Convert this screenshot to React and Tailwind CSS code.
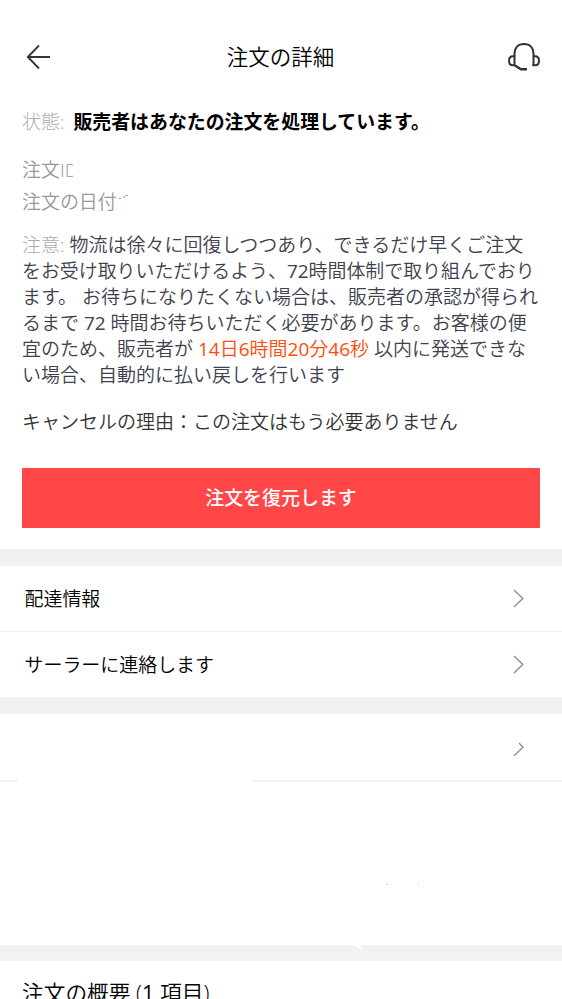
import React from 'react';

function BackIcon() {
  return (
    <svg width="26" height="26" viewBox="0 0 26 26" fill="none" stroke="#333333" strokeWidth="1.8">
      <path d="M13 1.5 L1.8 13 L13 24.5 M1.8 13 H24" />
    </svg>
  );
}

function HeadsetIcon() {
  return (
    <svg width="34" height="30" viewBox="0 0 34 30" fill="none" stroke="#333333" strokeWidth="2">
      <path d="M7.5 24 V12 C7.5 5.5 11.5 2 17 2 C22.5 2 26.5 5.5 26.5 12 V24" />
      <path d="M7.5 14.3 H6 C3 14.3 2 16 2 18.8 C2 21.5 3 23.3 6 23.3 H8" />
      <path d="M26.5 14.3 H28 C31 14.3 32 16 32 18.8 C32 21.5 31 23.3 28 23.3 H25.5" />
      <path d="M8 23.5 L14 27.3 H20" strokeWidth="2.4" />
    </svg>
  );
}

function Chevron({ faded }) {
  return (
    <svg width="12" height="20" viewBox="0 0 12 20" fill="none" stroke="#8a8b90" strokeWidth="1.3">
      <path d={faded ? 'M6 6 L10 10.3 L1 18.8' : 'M1 1 L9.8 9.5 L1 18'} />
    </svg>
  );
}

function LinkRow({ label }) {
  return (
    <div className="flex h-[65px] items-center justify-between pl-[24.5px] pr-[37px] text-black">
      <span className="text-[18.95px] leading-[26px]">{label}</span>
      <Chevron />
    </div>
  );
}

// Latin digits have no demi-light cut, so they use the regular weight
function WithDigits({ text }) {
  return text.split(/(\d+)/).map((part, i) => (
    i % 2 === 1 ? <span key={i} className="font-normal">{part}</span> : part
  ));
}

export default function App() {
  return (
    <div className="flex h-[999px] w-[562px] flex-col overflow-hidden whitespace-nowrap bg-white font-['Open_Sans','Noto_Sans_CJK_JP',sans-serif] text-[18.97px] font-[350] leading-[26px]">
      {/* Header */}
      <header className="mt-8 flex h-[50px] shrink-0 items-center justify-between pl-[26px] pr-[21px]">
        <BackIcon />
        <h1 className="pl-[2px] text-[21.5px] font-[350] text-black">注文の詳細</h1>
        <HeadsetIcon />
      </header>

      {/* Order status */}
      <section className="flex shrink-0 flex-col px-[22px] pt-[27px]">
        <div className="flex gap-[9px]">
          <span className="font-light text-[#aaaaaa]">状態:</span>
          <span className="text-[18.9px] font-bold text-black">販売者はあなたの注文を処理しています。</span>
        </div>

        <div className="mt-[22px] flex text-[#999999]">
          <span>注文I</span>
          <span className="w-[8px] overflow-hidden">D</span>
        </div>
        <div className="mt-[6px] flex text-[#999999]">
          <span>注文の日付</span>
          <svg className="mt-[5px]" width="14" height="14" viewBox="0 0 14 14" fill="none" stroke="#a0a0a0">
            <path d="M2 4.5 H4 M6 4 L9 1.5 H11" />
          </svg>
        </div>

        <div className="mt-[17px] text-[19px] text-[#3d404d]">
          <p><span className="font-light text-[#aaaaaa]">注意:</span> 物流は徐々に回復しつつあり、できるだけ早くご注文</p>
          <p className="text-[18.93px]"><WithDigits text="をお受け取りいただけるよう、72時間体制で取り組んでおり" /></p>
          <p>ます。 お待ちになりたくない場合は、販売者の承認が得られ</p>
          <p><WithDigits text="るまで 72 時間お待ちいただく必要があります。お客様の便" /></p>
          <p>
            宜のため、販売者が <span className="text-[#ff4b0a]"><WithDigits text="14日6時間20分46秒" /></span> 以内に発送できな
          </p>
          <p>い場合、自動的に払い戻しを行います</p>
        </div>

        <p className="mt-[21px] text-[19px] text-[#333333]">キャンセルの理由：この注文はもう必要ありません</p>

        <button className="mt-[33px] h-[60px] rounded-[1px] bg-[#ff4747] font-medium text-white">
          注文を復元します
        </button>
      </section>

      <div className="mt-[21px] h-[17px] shrink-0 bg-[#f1f1f1]" />

      {/* Links */}
      <nav className="shrink-0">
        <LinkRow label="配達情報" />
        <div className="h-px bg-[#f1f1f1]" />
        <LinkRow label="サーラーに連絡します" />
      </nav>

      <div className="h-[17px] shrink-0 bg-[#f1f1f1]" />

      {/* Store and item */}
      <section className="flex h-[231px] shrink-0 flex-col">
        <div className="flex h-[66px] items-center justify-end pr-[37px]">
          <Chevron faded />
        </div>
        <div className="flex h-[2px] justify-between">
          <div className="w-[18px] bg-[#f3f3f3]" />
          <div className="w-[311px] rounded-tl-full bg-[#f3f3f3]" />
        </div>
        <div className="mt-[102px] flex gap-[30px] pl-[386px]">
          <div className="h-px w-[2px] bg-[#d4d4d4]" />
          <div className="h-px w-px bg-[#cccccc]" />
        </div>
      </section>

      <div className="h-4 shrink-0 bg-[#f2f2f2]">
        <svg className="ml-[353px]" width="10" height="5" viewBox="0 0 10 5">
          <path d="M0 0 H6 L9 3 L7 4.5 L4 2.5 Z" fill="#ffffff" />
        </svg>
      </div>

      {/* Summary */}
      <h2 className="mt-[19px] pl-[22px] text-[21.7px] font-[350] text-black">
        <WithDigits text="注文の概要 (1 項目)" />
      </h2>
    </div>
  );
}
